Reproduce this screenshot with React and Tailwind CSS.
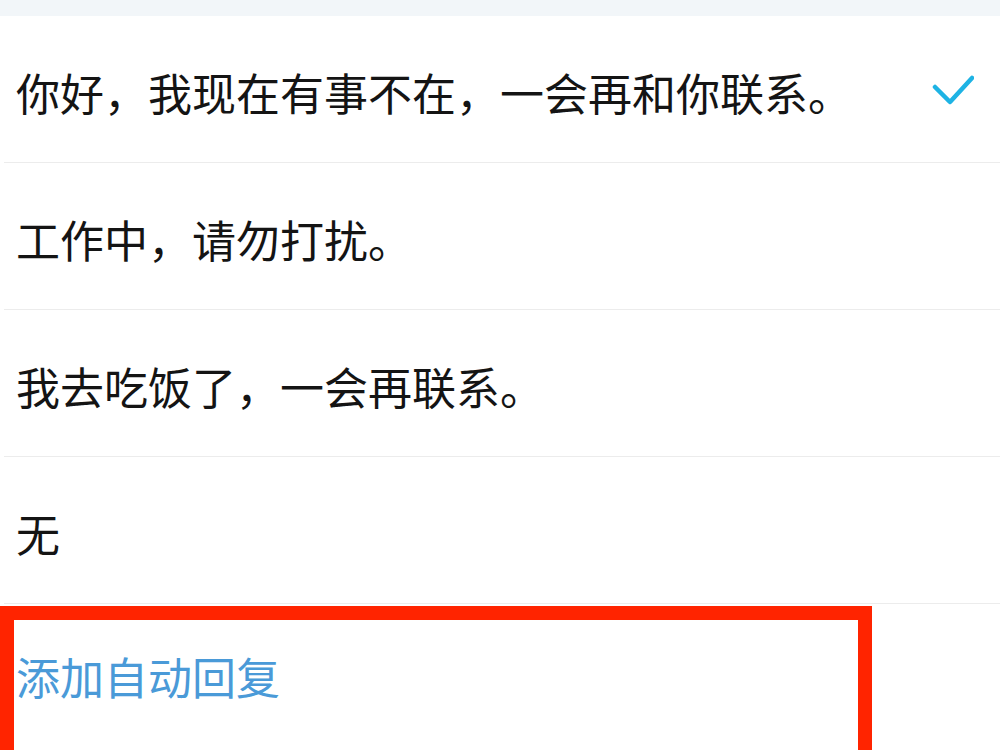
const rows = [
  { text: "你好，我现在有事不在，一会再和你联系。", checked: true },
  { text: "工作中，请勿打扰。" },
  { text: "我去吃饭了，一会再联系。" },
  { text: "无" },
];

export default function App() {
  return (
    <div
      className="w-[1000px] h-[750px] overflow-hidden bg-white"
      style={{ fontFamily: '"Noto Sans CJK SC", "Noto Sans", sans-serif' }}
    >
      <div className="h-[16px] bg-[#f2f6f9]" />
      {rows.map((row) => (
        <div key={row.text} className="flex">
          <div className="w-[4px]" />
          <div className="flex-1 h-[147px] border-b-[1px] border-[#ececec] flex items-center justify-between pl-[12px] pr-[26px]">
            <span className="text-[44px] leading-none text-[#141414] pt-[6px]">{row.text}</span>
            {row.checked && (
              <svg width="42" height="32" viewBox="0 0 42 32" className="mt-[4px]">
                <path d="M3 12 L18 27 L40 3" fill="none" stroke="#1eb3e4" strokeWidth="4.5" strokeLinecap="round" strokeLinejoin="round" />
              </svg>
            )}
          </div>
        </div>
      ))}
      <div className="flex pt-[2px]">
        <div className="w-[872px] h-[160px] border-[14px] border-[#ff2400] flex items-start pt-[34px] pl-[2px]">
          <span className="text-[44px] leading-none text-[#4a9ad8]">添加自动回复</span>
        </div>
        <div className="flex-1" />
      </div>
    </div>
  );
}
